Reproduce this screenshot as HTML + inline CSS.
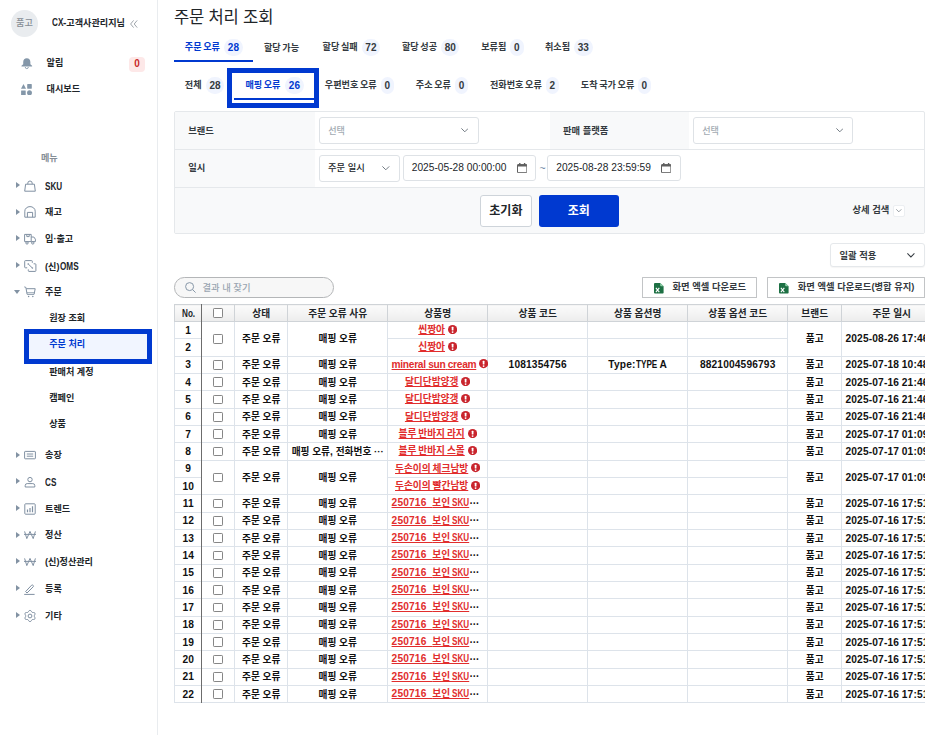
<!DOCTYPE html><html lang="ko"><head><meta charset="utf-8"><title>주문 처리 조회</title><style>
*{box-sizing:border-box;margin:0;padding:0}
html,body{width:940px;height:735px;overflow:hidden;background:#fff}
body{font-family:"Liberation Sans","Noto Sans CJK KR",sans-serif;color:#212529;position:relative;font-size:9.1px;line-height:1}
.abs{position:absolute}
span,a,button,label,th,td,li,div{white-space:nowrap}
ul{list-style:none}
.u{display:inline-block;transform-origin:0 50%}
#side{position:absolute;left:0;top:0;width:157.5px;height:735px;border-right:1px solid #e9ecef;background:#fff}
#avatar{position:absolute;left:11.2px;top:10px;width:26.6px;height:26.6px;border-radius:50%;background:#e9ecef;color:#868e96;font-size:9.2px;text-align:center;line-height:26.6px;font-weight:500}
#uname{position:absolute;left:51.6px;top:16.9px;font-size:9.1px;font-weight:700;line-height:11px;color:#212529}
.navtxt{position:absolute;font-weight:700;font-size:9.1px;line-height:11px;color:#212529}
.mi{position:absolute;left:0;width:157px;height:26.5px}
.mi .arr{position:absolute;left:16.1px;top:50%;margin-top:-3.6px;width:0;height:0;border-left:4px solid #8292a3;border-top:3.8px solid transparent;border-bottom:3.8px solid transparent}
.mi .arr.dn{left:13.8px;margin-top:-1.6px;border-left:3.7px solid transparent;border-right:3.7px solid transparent;border-top:4.2px solid #8292a3;border-bottom:0}
.mi svg{position:absolute;left:23.5px;top:50%;margin-top:-6px;width:12px;height:12px;overflow:visible}
.mi .lb{position:absolute;left:45.1px;top:50%;margin-top:-5px;font-weight:700;font-size:9.1px;line-height:11px}
.si{position:absolute;left:0;width:157px;height:26.4px}
.si .lb{position:absolute;left:49.2px;top:50%;margin-top:-5px;font-weight:700;font-size:9.1px;line-height:11px}
h1{position:absolute;left:174px;top:7.5px;font-size:16.6px;font-weight:400;line-height:20px;color:#212529;letter-spacing:-0.2px}
.tab{position:absolute;word-spacing:-.9px;font-size:9.1px;font-weight:700;line-height:11px;color:#343a40}
.tab.on{color:#0039d0}
.pill{position:absolute;height:17.2px;border-radius:8.6px;background:#f0f4fe;font-size:10px;font-weight:700;line-height:17.2px;text-align:center;color:#343a40}
.pill.on{color:#0039d0}
#panel{position:absolute;left:174.2px;top:111px;width:750.5px;height:123.3px;border:1px solid #e5e8eb;border-radius:2px;background:#fff;overflow:hidden}
.sel{position:absolute;border:1px solid #dee2e6;border-radius:3px;background:#fff;font-size:9.3px}

#grid{position:absolute;left:174.25px;top:304.00px;width:750.3px;height:399.20px;overflow:hidden}
#grid table{position:absolute;left:0;top:0;width:767.35px;border-collapse:collapse;table-layout:fixed;font-size:9.7px;font-weight:700;color:#111}
#grid th,#grid td{border:1px solid #dde3ea;text-align:center;vertical-align:middle;padding:0;overflow:hidden;line-height:11px;height:17.330px}
#grid th{height:17.00px;border-color:#cfd3d7;background:linear-gradient(#fbfbfb,#ececec);color:#212529;font-weight:700}
#grid .vl{position:absolute;left:27.00px;top:0;width:1px;height:100%;background:#6c6c6c}
#grid .cb{display:inline-block;position:relative;top:-.7px;width:9.8px;height:9.8px;border:1px solid #868686;border-radius:1.2px;background:#fff;vertical-align:middle}
#grid a{color:#e12d2d;text-decoration:underline;text-underline-offset:.8px;text-decoration-thickness:1px;font-weight:700;position:relative;top:-.6px;word-spacing:-.8px}
#grid a .u{text-decoration:underline;text-underline-offset:1.2px}
#grid td.ov{text-align:left;padding-left:3.4px}
#grid td.tight a{letter-spacing:-.3px;word-spacing:0}
#grid td.tight a .l{letter-spacing:-.3px}
#grid td.tight{text-align:left;padding-left:3.4px;overflow:visible}
#grid .ex{display:inline-block;width:9.2px;height:9.2px;vertical-align:middle;margin-left:2.9px;position:relative;top:-1.8px}
#grid .el{font-size:10px;position:relative;top:-3px;color:#111}
#grid td.dt{text-align:left;padding-left:3.2px}
#grid .l{letter-spacing:.15px}
</style></head><body>
<aside id="side">
<div id="avatar">품고</div>
<div id="uname"><span class="u" style="font-size:10.2px;transform:scaleX(0.80);margin-right:-2.83px">CX</span><span class="l" style="font-size:10.2px">-</span>고객사관리지님</div>
<svg class="abs" style="left:130px;top:19.6px" width="8" height="8" viewBox="0 0 8 8" fill="none" stroke="#868e96" stroke-width="0.8"><path d="M3.6 0.4L0.6 4l3 3.6M7.2 0.4L4.2 4l3 3.6"/></svg>
<svg class="abs" style="left:21.2px;top:58px" width="11.6" height="11.6" viewBox="0 0 12 12"><path fill="#8497a9" d="M6 .3C3.7.3 2.3 2 2.3 4.2v2.2L.5 7.9v1h11v-1L9.7 6.4V4.2C9.7 2 8.3.3 6 .3z"/><path d="M4.4 9.3a1.6 1.7 0 0 0 3.2 0" fill="none" stroke="#8497a9" stroke-width=".9"/></svg>
<div class="navtxt" style="left:46.6px;top:58.1px">알림</div>
<div class="abs" style="left:129px;top:56.8px;width:16.2px;height:14.8px;border-radius:4px;background:#fde8e8;color:#c92a2a;font-weight:700;font-size:10px;line-height:13px;text-align:center">0</div>
<svg class="abs" style="left:21.4px;top:84px" width="11" height="11.4" viewBox="0 0 11 10.8" preserveAspectRatio="none" fill="#8497a9"><path d="M2.5 0L5 4.4H0z"/><rect x="6.2" y="0" width="4.6" height="4.4" rx=".4"/><rect x="0.1" y="6.1" width="4.6" height="4.5" rx=".4"/><circle cx="8.5" cy="8.3" r="2.45"/></svg>
<div class="navtxt" style="left:46.6px;top:84.1px">대시보드</div>
<div class="abs" style="left:41px;top:152.6px;font-size:9.1px;line-height:11px;color:#868e96;font-weight:700">메뉴</div>
<nav><ul>
<li class="mi" style="top:172.55px"><i class="arr"></i><svg viewBox="0 0 12 12" fill="none" stroke="#8090a2" stroke-width="1" stroke-linejoin="round"><path d="M1.6 4.2h8.8l.9 7H.7z"/><path d="M3.8 4.2V3.2a2.2 2.2 0 0 1 4.4 0v1"/></svg><span class="lb"><span class="u" style="font-size:10.2px;transform:scaleX(0.80);margin-right:-4.31px">SKU</span></span></li>
<li class="mi" style="top:199.15px"><i class="arr"></i><svg viewBox="0 0 12 12" fill="none" stroke="#8090a2" stroke-width="1" stroke-linejoin="round"><path d="M.8 11.2V5.2a5.2 4.6 0 0 1 10.4 0v6z"/><path d="M3.4 11.2V6.4h5.2v4.8"/></svg><span class="lb">재고</span></li>
<li class="mi" style="top:225.75px"><i class="arr"></i><svg viewBox="0 0 12 12" fill="none" stroke="#8090a2" stroke-width="1" stroke-linejoin="round"><path d="M.6 1.4h6.6v7.2H.6z"/><path d="M7.2 4h2.6l1.6 2.2v2.4H7.2"/><circle cx="3" cy="9.9" r="1.2"/><circle cx="8.8" cy="9.9" r="1.2"/><path d="M2.8 1.4v2.2h2.4V1.4"/></svg><span class="lb">입·출고</span></li>
<li class="mi" style="top:252.35px"><i class="arr"></i><svg viewBox="0 0 12 12" fill="none" stroke="#8090a2" stroke-width="1" stroke-linejoin="round"><path d="M3.2 7.8H1.4a.7.7 0 0 1-.7-.7V1.3a.7.7 0 0 1 .7-.7h6.2a.7.7 0 0 1 .7.7v1.5"/><path d="M9.6 3.8h1.6a.7.7 0 0 1 .7.7v6.2a.7.7 0 0 1-.7.7H5a.7.7 0 0 1-.7-.7V9.4"/><path d="M4.4 4.2l3.8 3.6"/><circle cx="4.2" cy="4" r=".8" fill="#8090a2" stroke="none"/><circle cx="8.4" cy="8" r=".8" fill="#8090a2" stroke="none"/></svg><span class="lb">(신)<span class="u" style="font-size:10.2px;transform:scaleX(0.80);margin-right:-4.65px">OMS</span></span></li>
<li class="mi" style="top:278.55px"><i class="arr dn"></i><svg viewBox="0 0 12 12" fill="none" stroke="#8090a2" stroke-width="1" stroke-linejoin="round"><path d="M.3 .9l1.6.5 1.2 6.9h7l1.1-5.6H2.3"/><path d="M3 6.6h7.2" stroke-width=".7"/><circle cx="4.6" cy="10.6" r=".75" fill="#8090a2" stroke="none"/><circle cx="8.8" cy="10.6" r=".75" fill="#8090a2" stroke="none"/></svg><span class="lb">주문</span></li>
<li class="si" style="top:304.80px"><span class="lb">원장 조회</span></li>
<li class="si" style="top:331.00px"><div class="abs" style="left:24.3px;top:-2.5px;width:127.5px;height:35px;border:5px solid #0039d0;background:#f1f5ff"></div><span class="lb" style="color:#0039d0">주문 처리</span></li>
<li class="si" style="top:358.40px"><span class="lb">판매처 계정</span></li>
<li class="si" style="top:384.40px"><span class="lb">캠페인</span></li>
<li class="si" style="top:410.60px"><span class="lb">상품</span></li>
<li class="mi" style="top:442.15px"><i class="arr"></i><svg viewBox="0 0 12 12" fill="none" stroke="#8090a2" stroke-width="1" stroke-linejoin="round"><rect x=".6" y="2.4" width="10.8" height="7.4" rx=".6"/><path d="M2.8 5h6.4M2.8 7.2h6.4"/></svg><span class="lb">송장</span></li>
<li class="mi" style="top:468.75px"><i class="arr"></i><svg viewBox="0 0 12 12" fill="none" stroke="#8090a2" stroke-width="1" stroke-linejoin="round"><circle cx="6" cy="3.6" r="2.2"/><path d="M1.2 11V9.6a2 2 0 0 1 2-2h5.6a2 2 0 0 1 2 2V11z"/></svg><span class="lb"><span class="u" style="font-size:10.2px;transform:scaleX(0.80);margin-right:-2.83px">CS</span></span></li>
<li class="mi" style="top:495.35px"><i class="arr"></i><svg viewBox="0 0 12 12" fill="none" stroke="#8090a2" stroke-width="1" stroke-linejoin="round"><rect x=".8" y=".8" width="10.4" height="10.4" rx=".8"/><path d="M3.5 9.2V6.6M6 9.2V5M8.5 9.2V3.2" stroke-width="1.2"/></svg><span class="lb">트렌드</span></li>
<li class="mi" style="top:522.15px"><i class="arr"></i><svg viewBox="0 0 12 12" fill="none" stroke="#8090a2" stroke-width="1" stroke-linejoin="round"><path d="M.6 2.4l2.2 7.2L6 2.4l3.2 7.2 2.2-7.2M0 5.4h12"/></svg><span class="lb">정산</span></li>
<li class="mi" style="top:548.75px"><i class="arr"></i><svg viewBox="0 0 12 12" fill="none" stroke="#8090a2" stroke-width="1" stroke-linejoin="round"><path d="M.6 2.4l2.2 7.2L6 2.4l3.2 7.2 2.2-7.2M0 5.4h12"/></svg><span class="lb">(신)정산관리</span></li>
<li class="mi" style="top:575.55px"><i class="arr"></i><svg viewBox="0 0 12 12" fill="none" stroke="#8090a2" stroke-width="1" stroke-linejoin="round"><path d="M1.6 8.6L7.6 2.2a.9.9 0 0 1 1.3 0l.3.3a.9.9 0 0 1 0 1.3L3 10z"/><path d="M.2 11.4h10.4"/></svg><span class="lb">등록</span></li>
<li class="mi" style="top:602.35px"><i class="arr"></i><svg viewBox="0 0 12 12" fill="none" stroke="#8090a2" stroke-width="1" stroke-linejoin="round"><path d="M6.00 0.30L6.72 0.57L7.28 1.22L7.69 1.92L8.10 2.36L8.69 2.49L9.50 2.50L10.35 2.66L10.94 3.15L11.06 3.90L10.78 4.72L10.38 5.42L10.20 6.00L10.38 6.58L10.78 7.28L11.06 8.10L10.94 8.85L10.35 9.34L9.50 9.50L8.69 9.51L8.10 9.64L7.69 10.08L7.28 10.78L6.72 11.43L6.00 11.70L5.28 11.43L4.72 10.78L4.31 10.08L3.90 9.64L3.31 9.51L2.50 9.50L1.65 9.34L1.06 8.85L0.94 8.10L1.22 7.28L1.62 6.58L1.80 6.00L1.62 5.42L1.22 4.72L0.94 3.90L1.06 3.15L1.65 2.66L2.50 2.50L3.31 2.49L3.90 2.36L4.31 1.92L4.72 1.22L5.28 0.57z"/><circle cx="6" cy="6" r="1.9"/></svg><span class="lb">기타</span></li>
</ul></nav>
</aside>
<main>
<h1>주문 처리 조회</h1>
<div class="abs" style="left:227px;top:68px;width:92px;height:39.8px;border:5px solid #0039d0"></div>
<span class="tab on" style="left:184.8px;top:42.0px">주문 오류</span>
<span class="pill on" style="left:223.8px;top:38.9px;width:19.2px">28</span>
<span class="tab" style="left:264.0px;top:43.2px">할당 가능</span>
<span class="tab" style="left:322.6px;top:42.0px">할당 실패</span>
<span class="pill" style="left:361.8px;top:38.9px;width:18.2px">72</span>
<span class="tab" style="left:402.0px;top:42.0px">할당 성공</span>
<span class="pill" style="left:441.2px;top:38.9px;width:18.2px">80</span>
<span class="tab" style="left:481.2px;top:42.0px">보류됨</span>
<span class="pill" style="left:510.0px;top:38.9px;width:13.8px">0</span>
<span class="tab" style="left:545.0px;top:42.0px">취소됨</span>
<span class="pill" style="left:573.8px;top:38.9px;width:18.8px">33</span>
<span class="tab" style="left:184.8px;top:80.0px">전체</span>
<span class="pill" style="left:206.0px;top:76.9px;width:18.0px">28</span>
<span class="tab on" style="left:245.4px;top:80.0px">매핑 오류</span>
<span class="pill on" style="left:285.0px;top:76.9px;width:18.8px">26</span>
<span class="tab" style="left:324.8px;top:80.0px">우편번호 오류</span>
<span class="pill" style="left:380.8px;top:76.9px;width:13.2px">0</span>
<span class="tab" style="left:415.8px;top:80.0px">주소 오류</span>
<span class="pill" style="left:455.0px;top:76.9px;width:13.0px">0</span>
<span class="tab" style="left:490.0px;top:80.0px">전화번호 오류</span>
<span class="pill" style="left:545.8px;top:76.9px;width:13.0px">2</span>
<span class="tab" style="left:580.8px;top:80.0px">도착 국가 오류</span>
<span class="pill" style="left:637.8px;top:76.9px;width:12.8px">0</span>
<div class="abs" style="left:174px;top:59.8px;width:79.4px;height:2.2px;background:#0039d0"></div>
<div class="abs" style="left:234.4px;top:98px;width:79.4px;height:2.4px;background:#0039d0"></div>
<section id="panel">
<div class="abs" style="left:0;top:0;width:139.6px;height:76.0px;background:#f8f9fa"></div>
<div class="abs" style="left:374.8px;top:0;width:139.2px;height:38.2px;background:#f8f9fa"></div>
<div class="abs" style="left:0;top:75.2px;width:760px;height:50px;background:#f8f9fa"></div>
<div class="abs" style="left:0;top:37.0px;width:760px;height:1px;background:#e5e8eb"></div>
<div class="abs" style="left:0;top:75.0px;width:760px;height:1px;background:#e5e8eb"></div>
<label class="abs" style="left:13.0px;top:13.7px;font-size:9.3px;font-weight:700;color:#343a40;line-height:11px">브랜드</label>
<label class="abs" style="left:13.0px;top:51.2px;font-size:9.3px;font-weight:700;color:#343a40;line-height:11px">일시</label>
<label class="abs" style="left:387.8px;top:13.7px;font-size:9.3px;font-weight:700;color:#343a40;line-height:11px">판매 플랫폼</label>
<div class="sel" style="left:143.8px;top:5.4px;width:160.2px;height:26.8px"></div>
<span class="abs" style="left:153.0px;top:13.6px;font-size:9.1px;color:#a3abb3;font-weight:500;line-height:11px">선택</span>
<svg class="abs" style="left:285.4px;top:16.0px" width="7.6" height="4.4" viewBox="0 0 8 4.6" fill="none" stroke="#727b84" stroke-width="1.05"><path d="M.4 .4L4 4l3.6-3.6"/></svg>
<div class="sel" style="left:517.8px;top:5.4px;width:160.2px;height:26.8px"></div>
<span class="abs" style="left:527.0px;top:13.6px;font-size:9.1px;color:#a3abb3;font-weight:500;line-height:11px">선택</span>
<svg class="abs" style="left:660.6px;top:16.2px" width="7.6" height="4.4" viewBox="0 0 8 4.6" fill="none" stroke="#727b84" stroke-width="1.05"><path d="M.4 .4L4 4l3.6-3.6"/></svg>
<div class="sel" style="left:143.8px;top:43.4px;width:80.8px;height:26.6px"></div>
<span class="abs" style="left:152.8px;top:51.2px;font-size:9.3px;font-weight:500;color:#212529;line-height:11px">주문 일시</span>
<svg class="abs" style="left:207.2px;top:54.2px" width="7.6" height="4.4" viewBox="0 0 8 4.6" fill="none" stroke="#727b84" stroke-width="1.05"><path d="M.4 .4L4 4l3.6-3.6"/></svg>
<div class="sel" style="left:228.0px;top:43.4px;width:132.4px;height:25.6px"></div>
<span class="abs" style="left:236.6px;top:50.0px;font-size:10.2px;color:#212529;line-height:12px">2025-05-28 00:00:00</span>
<svg class="abs" style="left:341.7px;top:50.8px" width="10.4" height="10.2" viewBox="0 0 10.4 10.2"><rect x=".5" y="1.6" width="9.4" height="8.1" rx=".5" fill="#fff" stroke="#5f5f5f" stroke-width="1"/><path fill="#5f5f5f" d="M.5 1.6h9.4v1.9H.5zM2.1 .1h1.4v1.6H2.1zM6.9 .1h1.4v1.6H6.9z"/></svg>
<span class="abs" style="left:364.4px;top:51.1px;font-size:10.5px;color:#748ca8;line-height:11px">~</span>
<div class="sel" style="left:371.8px;top:43.4px;width:133.6px;height:25.6px"></div>
<span class="abs" style="left:381.1px;top:50.0px;font-size:10.2px;color:#212529;line-height:12px">2025-08-28 23:59:59</span>
<svg class="abs" style="left:485.5px;top:51.0px" width="10.4" height="10.2" viewBox="0 0 10.4 10.2"><rect x=".5" y="1.6" width="9.4" height="8.1" rx=".5" fill="#fff" stroke="#5f5f5f" stroke-width="1"/><path fill="#5f5f5f" d="M.5 1.6h9.4v1.9H.5zM2.1 .1h1.4v1.6H2.1zM6.9 .1h1.4v1.6H6.9z"/></svg>
<button class="abs" style="left:304.8px;top:83.0px;width:51.8px;height:31.6px;border:1px solid #ced4da;border-radius:3px;background:#fff;font:700 12px/1 'Liberation Sans','Noto Sans CJK KR',sans-serif;color:#212529">초기화</button>
<button class="abs" style="left:363.8px;top:82.8px;width:79.8px;height:32.0px;border:0;border-radius:3px;background:#0039d0;font:700 12px/1 'Liberation Sans','Noto Sans CJK KR',sans-serif;color:#fff">조회</button>
<span class="abs" style="left:677.3px;top:93.2px;font-size:9.3px;font-weight:700;color:#343a40;line-height:11px">상세 검색</span>
<div class="abs" style="left:717.6px;top:92.6px;width:12.2px;height:12.2px;border:1px solid #eceff2;border-radius:2px;background:#fff"></div>
<svg class="abs" style="left:721.0px;top:97.2px" width="5.6" height="3.3" viewBox="0 0 8 4.6" fill="none" stroke="#727b84" stroke-width="1.05"><path d="M.4 .4L4 4l3.6-3.6"/></svg>
</section>
<div class="sel" style="left:830px;top:243.2px;width:94.6px;height:24px;border-color:#e5e8eb;box-shadow:0 1px 1px rgba(0,0,0,.04)"></div>
<span class="abs" style="left:839.5px;top:250.7px;font-size:9.3px;font-weight:700;color:#343a40;line-height:11px">일괄 적용</span>
<svg class="abs" style="left:906.8px;top:253.2px" width="7.8" height="4.6" viewBox="0 0 8 4.6" fill="none" stroke="#343a40" stroke-width="1.05"><path d="M.4 .4L4 4l3.6-3.6"/></svg>
<div class="abs" style="left:174.2px;top:277px;width:160.2px;height:20.6px;border:1px solid #b4b6b8;border-radius:10.3px;background:#f7f7f7"></div>
<svg class="abs" style="left:185px;top:282px" width="11" height="11" viewBox="0 0 11 11" fill="none" stroke="#8797a8" stroke-width="1"><circle cx="4.6" cy="4.6" r="4"/><path d="M7.6 7.6l3 3"/></svg>
<span class="abs" style="left:202.5px;top:282.5px;font-size:9.3px;color:#9aa5b1;font-weight:500;line-height:11px">결과 내 찾기</span>
<div class="abs" style="left:642px;top:277px;width:114.8px;height:20.6px;border:1px solid #c2c4c6;border-radius:.5px;background:#fff"></div>
<svg class="abs" style="left:654.2px;top:283.0px" width="9.6" height="10.6" viewBox="0 0 9.6 10.6"><path fill="#1d7044" d="M1 0h5.2l3.4 3.2v6.6a.8.8 0 0 1-.8.8H1a1 1 0 0 1-1-1V1a1 1 0 0 1 1-1z"/><path fill="#8fd0a8" d="M6.2 0l3.4 3.2H7a.8.8 0 0 1-.8-.8z"/><path d="M1.9 4.9l3.4 4.2M5.3 4.9l-3.4 4.2" stroke="#fff" stroke-width="1.1"/></svg>
<span class="abs" style="left:672.5px;top:282.2px;font-size:9.3px;font-weight:700;color:#343a40;line-height:11px">화면 엑셀 다운로드</span>
<div class="abs" style="left:767.2px;top:277px;width:157.4px;height:20.6px;border:1px solid #c2c4c6;border-radius:.5px;background:#fff"></div>
<svg class="abs" style="left:779.0px;top:283.0px" width="9.6" height="10.6" viewBox="0 0 9.6 10.6"><path fill="#1d7044" d="M1 0h5.2l3.4 3.2v6.6a.8.8 0 0 1-.8.8H1a1 1 0 0 1-1-1V1a1 1 0 0 1 1-1z"/><path fill="#8fd0a8" d="M6.2 0l3.4 3.2H7a.8.8 0 0 1-.8-.8z"/><path d="M1.9 4.9l3.4 4.2M5.3 4.9l-3.4 4.2" stroke="#fff" stroke-width="1.1"/></svg>
<span class="abs" style="left:797.8px;top:282.2px;font-size:9.3px;font-weight:700;color:#343a40;line-height:11px">화면 엑셀 다운로드(병합 유지)</span>
<div id="grid"><table><colgroup><col style="width:27.00px"><col style="width:32.95px"><col style="width:53.00px"><col style="width:100.00px"><col style="width:100.00px"><col style="width:100.00px"><col style="width:100.00px"><col style="width:100.00px"><col style="width:54.10px"><col style="width:100.00px"></colgroup>
<thead><tr><th class="no"><span class="u" style="font-size:10.2px;transform:scaleX(.8);margin-right:-3.3px">No.</span></th><th><i class="cb"></i></th><th>상태</th><th>주문 오류 사유</th><th>상품명</th><th>상품 코드</th><th>상품 옵션명</th><th>상품 옵션 코드</th><th>브랜드</th><th>주문 일시</th></tr></thead><tbody>
<tr><td class="no"><span class="l" style="font-size:10.2px">1</span></td><td rowspan="2"><i class="cb"></i></td><td rowspan="2">주문 오류</td><td rowspan="2">매핑 오류</td><td class="nm"><a>씬짱아</a><svg class="ex" viewBox="0 0 9 9"><circle cx="4.5" cy="4.5" r="4.5" fill="#c9252d"/><rect x="3.65" y="1.7" width="1.7" height="3.7" rx=".5" fill="#fff"/><circle cx="4.5" cy="6.9" r=".9" fill="#fff"/></svg></td><td class="num"></td><td></td><td class="num"></td><td rowspan="2">품고</td><td class="dt" rowspan="2"><span class="l" style="font-size:10.2px">2025-08-26</span> <span class="l" style="font-size:10.2px">17:46:31</span></td></tr>
<tr><td class="no"><span class="l" style="font-size:10.2px">2</span></td><td class="nm"><a>신짱아</a><svg class="ex" viewBox="0 0 9 9"><circle cx="4.5" cy="4.5" r="4.5" fill="#c9252d"/><rect x="3.65" y="1.7" width="1.7" height="3.7" rx=".5" fill="#fff"/><circle cx="4.5" cy="6.9" r=".9" fill="#fff"/></svg></td><td class="num"></td><td></td><td class="num"></td></tr>
<tr><td class="no"><span class="l" style="font-size:10.2px">3</span></td><td><i class="cb"></i></td><td>주문 오류</td><td>매핑 오류</td><td class="nm tight"><a><span class="l" style="font-size:10.2px">mineral</span> <span class="l" style="font-size:10.2px">sun</span> <span class="l" style="font-size:10.2px">cream</span></a><svg class="ex" viewBox="0 0 9 9"><circle cx="4.5" cy="4.5" r="4.5" fill="#c9252d"/><rect x="3.65" y="1.7" width="1.7" height="3.7" rx=".5" fill="#fff"/><circle cx="4.5" cy="6.9" r=".9" fill="#fff"/></svg></td><td class="num"><span class="l" style="font-size:10.2px">1081354756</span></td><td><span class="l" style="font-size:10.2px">Type:</span><span class="u" style="font-size:10.2px;transform:scaleX(0.80);margin-right:-5.33px">TYPE</span> <span class="l" style="font-size:10.2px">A</span></td><td class="num"><span class="l" style="font-size:10.2px">8821004596793</span></td><td>품고</td><td class="dt"><span class="l" style="font-size:10.2px">2025-07-18</span> <span class="l" style="font-size:10.2px">10:48:52</span></td></tr>
<tr><td class="no"><span class="l" style="font-size:10.2px">4</span></td><td><i class="cb"></i></td><td>주문 오류</td><td>매핑 오류</td><td class="nm"><a>달디단밤양갱</a><svg class="ex" viewBox="0 0 9 9"><circle cx="4.5" cy="4.5" r="4.5" fill="#c9252d"/><rect x="3.65" y="1.7" width="1.7" height="3.7" rx=".5" fill="#fff"/><circle cx="4.5" cy="6.9" r=".9" fill="#fff"/></svg></td><td class="num"></td><td></td><td class="num"></td><td>품고</td><td class="dt"><span class="l" style="font-size:10.2px">2025-07-16</span> <span class="l" style="font-size:10.2px">21:46:08</span></td></tr>
<tr><td class="no"><span class="l" style="font-size:10.2px">5</span></td><td><i class="cb"></i></td><td>주문 오류</td><td>매핑 오류</td><td class="nm"><a>달디단밤양갱</a><svg class="ex" viewBox="0 0 9 9"><circle cx="4.5" cy="4.5" r="4.5" fill="#c9252d"/><rect x="3.65" y="1.7" width="1.7" height="3.7" rx=".5" fill="#fff"/><circle cx="4.5" cy="6.9" r=".9" fill="#fff"/></svg></td><td class="num"></td><td></td><td class="num"></td><td>품고</td><td class="dt"><span class="l" style="font-size:10.2px">2025-07-16</span> <span class="l" style="font-size:10.2px">21:46:08</span></td></tr>
<tr><td class="no"><span class="l" style="font-size:10.2px">6</span></td><td><i class="cb"></i></td><td>주문 오류</td><td>매핑 오류</td><td class="nm"><a>달디단밤양갱</a><svg class="ex" viewBox="0 0 9 9"><circle cx="4.5" cy="4.5" r="4.5" fill="#c9252d"/><rect x="3.65" y="1.7" width="1.7" height="3.7" rx=".5" fill="#fff"/><circle cx="4.5" cy="6.9" r=".9" fill="#fff"/></svg></td><td class="num"></td><td></td><td class="num"></td><td>품고</td><td class="dt"><span class="l" style="font-size:10.2px">2025-07-16</span> <span class="l" style="font-size:10.2px">21:46:08</span></td></tr>
<tr><td class="no"><span class="l" style="font-size:10.2px">7</span></td><td><i class="cb"></i></td><td>주문 오류</td><td>매핑 오류</td><td class="nm"><a>블루 반바지 라지</a><svg class="ex" viewBox="0 0 9 9"><circle cx="4.5" cy="4.5" r="4.5" fill="#c9252d"/><rect x="3.65" y="1.7" width="1.7" height="3.7" rx=".5" fill="#fff"/><circle cx="4.5" cy="6.9" r=".9" fill="#fff"/></svg></td><td class="num"></td><td></td><td class="num"></td><td>품고</td><td class="dt"><span class="l" style="font-size:10.2px">2025-07-17</span> <span class="l" style="font-size:10.2px">01:09:44</span></td></tr>
<tr><td class="no"><span class="l" style="font-size:10.2px">8</span></td><td><i class="cb"></i></td><td>주문 오류</td><td>매핑 오류<span class="l" style="font-size:10.2px">,</span> 전화번호 ···</td><td class="nm"><a>블루 반바지 스몰</a><svg class="ex" viewBox="0 0 9 9"><circle cx="4.5" cy="4.5" r="4.5" fill="#c9252d"/><rect x="3.65" y="1.7" width="1.7" height="3.7" rx=".5" fill="#fff"/><circle cx="4.5" cy="6.9" r=".9" fill="#fff"/></svg></td><td class="num"></td><td></td><td class="num"></td><td>품고</td><td class="dt"><span class="l" style="font-size:10.2px">2025-07-17</span> <span class="l" style="font-size:10.2px">01:09:44</span></td></tr>
<tr><td class="no"><span class="l" style="font-size:10.2px">9</span></td><td rowspan="2"><i class="cb"></i></td><td rowspan="2">주문 오류</td><td rowspan="2">매핑 오류</td><td class="nm"><a>두손이의 체크남방</a><svg class="ex" viewBox="0 0 9 9"><circle cx="4.5" cy="4.5" r="4.5" fill="#c9252d"/><rect x="3.65" y="1.7" width="1.7" height="3.7" rx=".5" fill="#fff"/><circle cx="4.5" cy="6.9" r=".9" fill="#fff"/></svg></td><td class="num"></td><td></td><td class="num"></td><td rowspan="2">품고</td><td class="dt" rowspan="2"><span class="l" style="font-size:10.2px">2025-07-17</span> <span class="l" style="font-size:10.2px">01:09:44</span></td></tr>
<tr><td class="no"><span class="l" style="font-size:10.2px">10</span></td><td class="nm"><a>두손이의 빨간남방</a><svg class="ex" viewBox="0 0 9 9"><circle cx="4.5" cy="4.5" r="4.5" fill="#c9252d"/><rect x="3.65" y="1.7" width="1.7" height="3.7" rx=".5" fill="#fff"/><circle cx="4.5" cy="6.9" r=".9" fill="#fff"/></svg></td><td class="num"></td><td></td><td class="num"></td></tr>
<tr><td class="no"><span class="l" style="font-size:10.2px">11</span></td><td><i class="cb"></i></td><td>주문 오류</td><td>매핑 오류</td><td class="nm ov"><a><span class="l" style="font-size:10.2px">250716_</span>보인 <span class="u" style="font-size:10.2px;transform:scaleX(0.80);margin-right:-4.31px">SKU</span></a><span class="el">…</span></td><td class="num"></td><td></td><td class="num"></td><td>품고</td><td class="dt"><span class="l" style="font-size:10.2px">2025-07-16</span> <span class="l" style="font-size:10.2px">17:51:20</span></td></tr>
<tr><td class="no"><span class="l" style="font-size:10.2px">12</span></td><td><i class="cb"></i></td><td>주문 오류</td><td>매핑 오류</td><td class="nm ov"><a><span class="l" style="font-size:10.2px">250716_</span>보인 <span class="u" style="font-size:10.2px;transform:scaleX(0.80);margin-right:-4.31px">SKU</span></a><span class="el">…</span></td><td class="num"></td><td></td><td class="num"></td><td>품고</td><td class="dt"><span class="l" style="font-size:10.2px">2025-07-16</span> <span class="l" style="font-size:10.2px">17:51:20</span></td></tr>
<tr><td class="no"><span class="l" style="font-size:10.2px">13</span></td><td><i class="cb"></i></td><td>주문 오류</td><td>매핑 오류</td><td class="nm ov"><a><span class="l" style="font-size:10.2px">250716_</span>보인 <span class="u" style="font-size:10.2px;transform:scaleX(0.80);margin-right:-4.31px">SKU</span></a><span class="el">…</span></td><td class="num"></td><td></td><td class="num"></td><td>품고</td><td class="dt"><span class="l" style="font-size:10.2px">2025-07-16</span> <span class="l" style="font-size:10.2px">17:51:20</span></td></tr>
<tr><td class="no"><span class="l" style="font-size:10.2px">14</span></td><td><i class="cb"></i></td><td>주문 오류</td><td>매핑 오류</td><td class="nm ov"><a><span class="l" style="font-size:10.2px">250716_</span>보인 <span class="u" style="font-size:10.2px;transform:scaleX(0.80);margin-right:-4.31px">SKU</span></a><span class="el">…</span></td><td class="num"></td><td></td><td class="num"></td><td>품고</td><td class="dt"><span class="l" style="font-size:10.2px">2025-07-16</span> <span class="l" style="font-size:10.2px">17:51:20</span></td></tr>
<tr><td class="no"><span class="l" style="font-size:10.2px">15</span></td><td><i class="cb"></i></td><td>주문 오류</td><td>매핑 오류</td><td class="nm ov"><a><span class="l" style="font-size:10.2px">250716_</span>보인 <span class="u" style="font-size:10.2px;transform:scaleX(0.80);margin-right:-4.31px">SKU</span></a><span class="el">…</span></td><td class="num"></td><td></td><td class="num"></td><td>품고</td><td class="dt"><span class="l" style="font-size:10.2px">2025-07-16</span> <span class="l" style="font-size:10.2px">17:51:20</span></td></tr>
<tr><td class="no"><span class="l" style="font-size:10.2px">16</span></td><td><i class="cb"></i></td><td>주문 오류</td><td>매핑 오류</td><td class="nm ov"><a><span class="l" style="font-size:10.2px">250716_</span>보인 <span class="u" style="font-size:10.2px;transform:scaleX(0.80);margin-right:-4.31px">SKU</span></a><span class="el">…</span></td><td class="num"></td><td></td><td class="num"></td><td>품고</td><td class="dt"><span class="l" style="font-size:10.2px">2025-07-16</span> <span class="l" style="font-size:10.2px">17:51:20</span></td></tr>
<tr><td class="no"><span class="l" style="font-size:10.2px">17</span></td><td><i class="cb"></i></td><td>주문 오류</td><td>매핑 오류</td><td class="nm ov"><a><span class="l" style="font-size:10.2px">250716_</span>보인 <span class="u" style="font-size:10.2px;transform:scaleX(0.80);margin-right:-4.31px">SKU</span></a><span class="el">…</span></td><td class="num"></td><td></td><td class="num"></td><td>품고</td><td class="dt"><span class="l" style="font-size:10.2px">2025-07-16</span> <span class="l" style="font-size:10.2px">17:51:20</span></td></tr>
<tr><td class="no"><span class="l" style="font-size:10.2px">18</span></td><td><i class="cb"></i></td><td>주문 오류</td><td>매핑 오류</td><td class="nm ov"><a><span class="l" style="font-size:10.2px">250716_</span>보인 <span class="u" style="font-size:10.2px;transform:scaleX(0.80);margin-right:-4.31px">SKU</span></a><span class="el">…</span></td><td class="num"></td><td></td><td class="num"></td><td>품고</td><td class="dt"><span class="l" style="font-size:10.2px">2025-07-16</span> <span class="l" style="font-size:10.2px">17:51:20</span></td></tr>
<tr><td class="no"><span class="l" style="font-size:10.2px">19</span></td><td><i class="cb"></i></td><td>주문 오류</td><td>매핑 오류</td><td class="nm ov"><a><span class="l" style="font-size:10.2px">250716_</span>보인 <span class="u" style="font-size:10.2px;transform:scaleX(0.80);margin-right:-4.31px">SKU</span></a><span class="el">…</span></td><td class="num"></td><td></td><td class="num"></td><td>품고</td><td class="dt"><span class="l" style="font-size:10.2px">2025-07-16</span> <span class="l" style="font-size:10.2px">17:51:20</span></td></tr>
<tr><td class="no"><span class="l" style="font-size:10.2px">20</span></td><td><i class="cb"></i></td><td>주문 오류</td><td>매핑 오류</td><td class="nm ov"><a><span class="l" style="font-size:10.2px">250716_</span>보인 <span class="u" style="font-size:10.2px;transform:scaleX(0.80);margin-right:-4.31px">SKU</span></a><span class="el">…</span></td><td class="num"></td><td></td><td class="num"></td><td>품고</td><td class="dt"><span class="l" style="font-size:10.2px">2025-07-16</span> <span class="l" style="font-size:10.2px">17:51:20</span></td></tr>
<tr><td class="no"><span class="l" style="font-size:10.2px">21</span></td><td><i class="cb"></i></td><td>주문 오류</td><td>매핑 오류</td><td class="nm ov"><a><span class="l" style="font-size:10.2px">250716_</span>보인 <span class="u" style="font-size:10.2px;transform:scaleX(0.80);margin-right:-4.31px">SKU</span></a><span class="el">…</span></td><td class="num"></td><td></td><td class="num"></td><td>품고</td><td class="dt"><span class="l" style="font-size:10.2px">2025-07-16</span> <span class="l" style="font-size:10.2px">17:51:20</span></td></tr>
<tr><td class="no"><span class="l" style="font-size:10.2px">22</span></td><td><i class="cb"></i></td><td>주문 오류</td><td>매핑 오류</td><td class="nm ov"><a><span class="l" style="font-size:10.2px">250716_</span>보인 <span class="u" style="font-size:10.2px;transform:scaleX(0.80);margin-right:-4.31px">SKU</span></a><span class="el">…</span></td><td class="num"></td><td></td><td class="num"></td><td>품고</td><td class="dt"><span class="l" style="font-size:10.2px">2025-07-16</span> <span class="l" style="font-size:10.2px">17:51:20</span></td></tr>
</tbody></table><i class="vl"></i></div>
</main></body></html>
